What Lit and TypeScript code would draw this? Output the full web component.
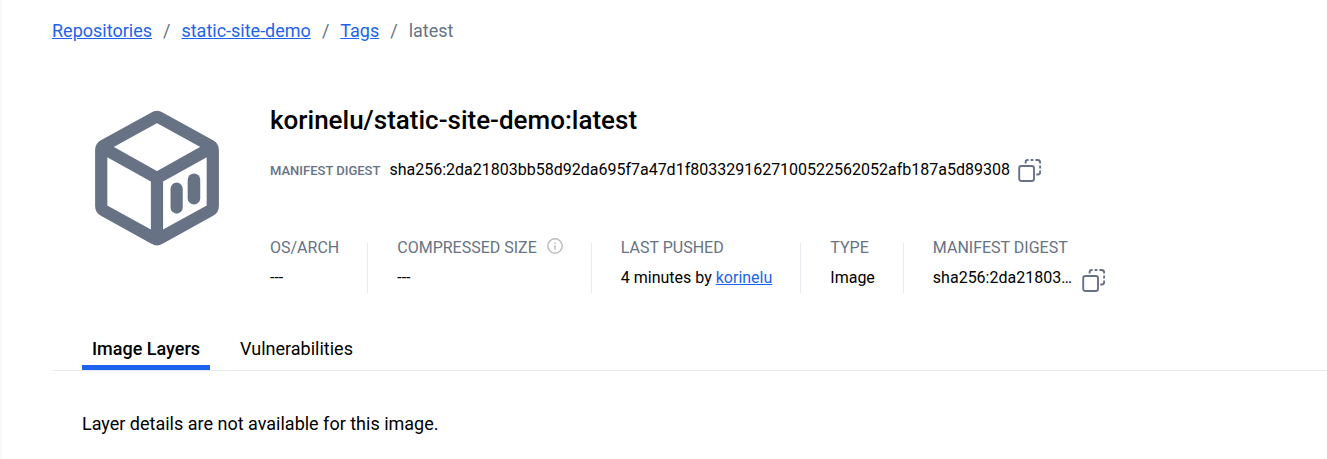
import { LitElement, html, css, svg } from "lit";
import { customElement, state } from "lit/decorators.js";
import { classMap } from "lit/directives/class-map.js";

@customElement("copy-button")
export class CopyButton extends LitElement {
  static properties = { label: { type: String } };
  declare label: string;

  static styles = css`
    :host {
      display: block;
      flex: none;
    }
    .copy {
      display: block;
      padding: 0;
      border: 0;
      background: none;
      color: #677285;
      cursor: pointer;
    }
    .glyph {
      display: block;
    }
  `;

  render() {
    return html`<button class="copy" type="button" aria-label=${this.label}>
      <svg class="glyph" width="24" height="24" viewBox="0 0 24 24" fill="none" stroke="currentColor" stroke-width="1.9">
        <rect x="1.2" y="8" width="14.8" height="15" rx="2.2" />
        <path d="M7.600 5.600V4.200a2.200 2.200 0 0 1 2.200-2.200h.8M12.600 2h2.800M17.400 2h2.200a2.500 2.500 0 0 1 2.500 2.500v1M22.100 7.500v3M22.100 12.500v1.800a2.200 2.200 0 0 1-2.200 2.200h-1.600" />
      </svg>
    </button>`;
  }
}

const boxArt = svg`
  <g fill="none" stroke="#677285" stroke-width="37" stroke-linejoin="round">
    <path d="M223 66.500Q231 61 239 66.500L392 150.500Q400 155 400 164V334Q400 343 392 347.500L239 432Q231 437 223 432L70 347.500Q62 343 62 334V164Q62 155 70 150.500Z" />
    <path d="M66 157L231 249L396 157M231 249V430" />
  </g>
  <g fill="#677285">
    <rect x="272" y="263" width="37" height="94" rx="18.500" />
    <rect x="324" y="235" width="38" height="94" rx="19" />
  </g>`;

@customElement("app-root")
export class AppRoot extends LitElement {
  @state() private tab = 0;

  static styles = css`
    :host {
      display: block;
      font-family: Roboto, sans-serif;
      font-size: 16px;
      line-height: 20px;
      color: #000;
    }
    .page {
      min-height: 100vh;
      box-sizing: border-box;
      border-left: 2px solid #f9f9fa;
      padding: 20px 0 24px 50px;
      background: #fff;
    }
    a {
      color: #1d63ed;
      text-decoration: underline;
    }
    .crumbs {
      display: flex;
      flex-wrap: wrap;
      gap: 11px;
      margin: 0;
      padding: 0;
      list-style: none;
      font-size: 18px;
      line-height: 22px;
      color: #677285;
    }
    .summary {
      display: flex;
      gap: 50px;
      padding: 62px 30px 0 42px;
    }
    .art {
      flex: none;
      display: block;
      margin-top: 6px;
    }
    .details {
      min-width: 0;
    }
    .title {
      margin: 0;
      font-size: 26px;
      line-height: 32px;
      font-weight: 500;
    }
    .digest {
      display: flex;
      align-items: center;
      gap: 8px;
      margin-top: 22px;
    }
    .digest-text {
      display: flex;
      align-items: baseline;
      gap: 9px;
      min-width: 0;
    }
    .digest-label {
      flex: none;
      font-size: 13px;
      font-weight: 500;
      color: #677285;
    }
    .digest-value {
      min-width: 0;
      overflow-wrap: anywhere;
    }
    .stats {
      display: flex;
      flex-wrap: wrap;
      margin: 56px 0 0;
    }
    .stat {
      min-height: 55px;
      box-sizing: border-box;
      margin-right: 29px;
      padding-right: 29px;
      background: linear-gradient(#e7eaef, #e7eaef) right bottom / 1px 50px no-repeat;
    }
    .stat:last-child {
      margin-right: 0;
      padding-right: 0;
      background: none;
    }
    .stat-label {
      display: flex;
      gap: 10px;
      color: #677285;
    }
    .stat-value {
      display: flex;
      gap: 4px;
      margin: 10px 0 0;
    }
    .short {
      margin-right: 6px;
    }
    .info {
      display: block;
    }
    .tabs {
      display: flex;
      gap: 20px;
      margin-top: 39px;
      padding-left: 30px;
      border-bottom: 1px solid #e7eaef;
    }
    .tab {
      padding: 5px 10px 4px;
      border: 0;
      border-bottom: 5px solid transparent;
      background: none;
      font-family: inherit;
      font-size: 18px;
      line-height: 24px;
      color: #000;
      cursor: pointer;
    }
    .tab.active {
      font-weight: 500;
      border-bottom-color: #1d63ed;
    }
    .message {
      margin: 41px 30px 0;
      font-size: 18px;
      line-height: 24px;
    }
  `;

  render() {
    return html`<main class="page">
      <nav aria-label="Breadcrumb">
        <ol class="crumbs">
          <li><a href="#repositories">Repositories</a></li>
          <li aria-hidden="true">/</li>
          <li><a href="#static-site-demo">static-site-demo</a></li>
          <li aria-hidden="true">/</li>
          <li><a href="#tags">Tags</a></li>
          <li aria-hidden="true">/</li>
          <li aria-current="page">latest</li>
        </ol>
      </nav>
      <header class="summary">
        <svg class="art" width="126" height="136" viewBox="43 43 376 412" aria-hidden="true">${boxArt}</svg>
        <div class="details">
          <h1 class="title">korinelu/static-site-demo:latest</h1>
          <div class="digest">
            <div class="digest-text">
              <span class="digest-label">MANIFEST DIGEST</span>
              <span class="digest-value">sha256:2da21803bb58d92da695f7a47d1f8033291627100522562052afb187a5d89308</span>
            </div>
            <copy-button label="Copy manifest digest"></copy-button>
          </div>
          <dl class="stats">
            <div class="stat">
              <dt class="stat-label">OS/ARCH</dt>
              <dd class="stat-value">---</dd>
            </div>
            <div class="stat">
              <dt class="stat-label">
                COMPRESSED SIZE
                <svg class="info" width="16" height="16" viewBox="0 0 16 16" fill="none" stroke="#bdbdbd" stroke-width="1.5" aria-hidden="true">
                  <circle cx="8" cy="8" r="7.200" />
                  <path d="M8 7.200v4.400M8 4.400v1.500" />
                </svg>
              </dt>
              <dd class="stat-value">---</dd>
            </div>
            <div class="stat">
              <dt class="stat-label">LAST PUSHED</dt>
              <dd class="stat-value">4 minutes by <a href="#korinelu">korinelu</a></dd>
            </div>
            <div class="stat">
              <dt class="stat-label">TYPE</dt>
              <dd class="stat-value">Image</dd>
            </div>
            <div class="stat">
              <dt class="stat-label">MANIFEST DIGEST</dt>
              <dd class="stat-value">
                <span class="short">sha256:2da21803…</span>
                <copy-button label="Copy short digest"></copy-button>
              </dd>
            </div>
          </dl>
        </div>
      </header>
      <div class="tabs" role="tablist">
        ${["Image Layers", "Vulnerabilities"].map(
          (name, i) => html`<button
            class=${classMap({ tab: true, active: this.tab === i })}
            role="tab"
            aria-selected=${this.tab === i ? "true" : "false"}
            @click=${() => (this.tab = i)}
          >${name}</button>`
        )}
      </div>
      <p class="message">Layer details are not available for this image.</p>
    </main>`;
  }
}
